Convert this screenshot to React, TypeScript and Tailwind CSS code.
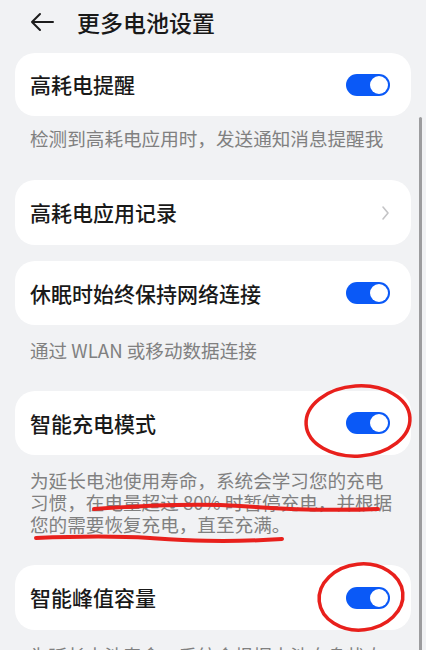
import React from "react";

const FONT = "font-['Noto_Sans_CJK_SC','Noto_Sans',sans-serif]";

function Toggle() {
  return (
    <div className="flex h-[22px] w-[44px] items-center justify-end rounded-full bg-[#0a59f7] pr-[2px]">
      <div className="h-[18px] w-[18px] rounded-full bg-white" />
    </div>
  );
}

function Chevron() {
  return (
    <svg width="10" height="16" viewBox="0 0 10 16" fill="none" stroke="#c4c4c6" strokeWidth="1.6" strokeLinecap="round" strokeLinejoin="round">
      <path d="M3 2l5 6-5 6" />
    </svg>
  );
}

function Card({ title, right, h }: { title: string; right: React.ReactNode; h: string }) {
  return (
    <div className={`flex ${h} items-center justify-between rounded-[20px] bg-white pl-[15px] pr-[21px]`}>
      <span className="text-[21px] font-medium leading-none text-[#191919]">{title}</span>
      {right}
    </div>
  );
}

function Desc({ children, pt }: { children: React.ReactNode; pt: string }) {
  return (
    <p className={`px-[15px] pb-[30px] ${pt} text-[18.6px] leading-[22px] text-[#808080]`}>
      {children}
    </p>
  );
}

export default function App() {
  return (
    <div className={`relative h-[650px] w-[426px] overflow-hidden bg-[#f1f2f4] ${FONT}`}>
      <div className="flex h-[44px] items-center pl-[30px]">
        <svg width="24" height="20" viewBox="0 0 24 20" fill="none" stroke="#1c1c1c" strokeWidth="2" strokeLinecap="round" strokeLinejoin="round">
          <path d="M23 10H2M10 2L2 10l8 8" />
        </svg>
        <span className="ml-[23px] text-[23px] font-medium text-[#191919]">更多电池设置</span>
      </div>

      <div className="mt-[9px] flex flex-col px-[15px]">
        <Card h="h-[63px]" title="高耗电提醒" right={<Toggle />} />
        <Desc pt="pt-[11px]">
          <span className="block pb-px">检测到高耗电应用时，发送通知消息提醒我</span>
        </Desc>

        <Card h="h-[65px]" title="高耗电应用记录" right={<Chevron />} />
        <div className="h-[16px]" />
        <Card h="h-[64px]" title="休眠时始终保持网络连接" right={<Toggle />} />
        <Desc pt="pt-[14px]">通过 WLAN 或移动数据连接</Desc>

        <Card h="h-[64px]" title="智能充电模式" right={<Toggle />} />
        <Desc pt="pt-[14px]">
          为延长电池使用寿命，系统会学习您的充电习惯，在电量超过 80% 时暂停充电，并根据您的需要恢复充电，直至充满。
        </Desc>

        <Card h="h-[65px]" title="智能峰值容量" right={<Toggle />} />
        <Desc pt="pt-[14px]">为延长电池寿命，系统会根据电池自身状态</Desc>
      </div>

      {/* scroll indicator */}
      <div className="absolute left-[419px] top-[117px] h-[560px] w-[3px] rounded-full bg-[#9c9c9e]" />

      {/* red annotations */}
      <svg className="pointer-events-none absolute left-0 top-0" width="426" height="650" viewBox="0 0 426 650" fill="none" stroke="#e8201c" strokeWidth="3.5" strokeLinecap="round">
        <ellipse cx="358" cy="421" rx="52" ry="35" transform="rotate(-4 358 421)" />
        <ellipse cx="361" cy="597" rx="42" ry="33" transform="rotate(-6 361 597)" />
        <path d="M94 509 C150 505, 200 503, 240 506 S330 511, 378 509" strokeWidth="4" />
        <path d="M36 538 C80 536, 120 536, 150 538 S220 543, 282 539" strokeWidth="4" />
      </svg>
    </div>
  );
}
